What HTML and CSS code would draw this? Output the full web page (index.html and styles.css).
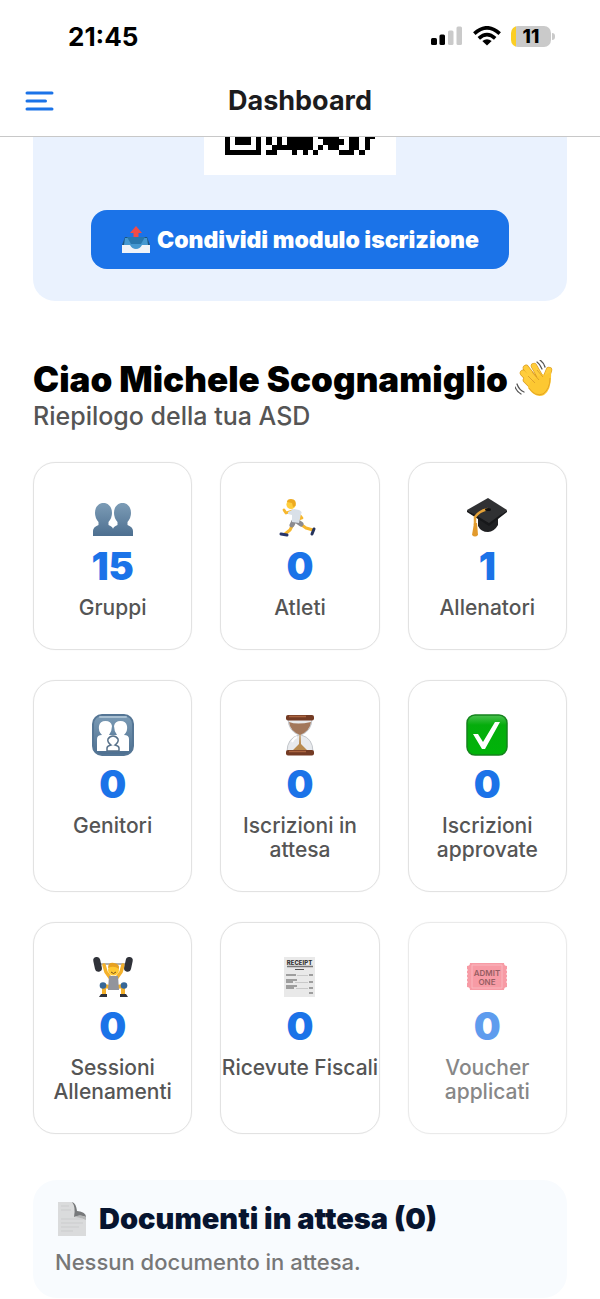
FILE: index.html
```html
<!DOCTYPE html>
<html lang="it">
<head>
<meta charset="utf-8">
<meta name="viewport" content="width=device-width, initial-scale=1">
<title>Dashboard</title>
<link rel="stylesheet" href="styles.css">
</head>
<body>
<div class="status">
  <span class="clock">21:45</span>
  <div class="status-icons">
    <svg width="32" height="20" viewBox="0 0 32 20" aria-hidden="true">
      <rect x="0" y="12" width="6" height="7" rx="1.500"/><rect x="8.500" y="8.500" width="5.500" height="10.500" rx="1.500"/>
      <g fill="#cacaca"><rect x="17" y="4.500" width="5.500" height="14.500" rx="1.500"/><rect x="25.500" y="0.500" width="5.500" height="18.500" rx="1.500"/></g>
    </svg>
    <svg width="28" height="20" viewBox="0 0 28 20" aria-hidden="true">
      <g fill="none" stroke="#000" stroke-width="3.600"><path d="M1.300 7.600Q14-4 26.700 7.600"/><path d="M5.800 12.300Q14 4.800 22.200 12.300"/></g>
      <path d="M9.300 15Q14 11.500 18.700 15L14 19.500Z"/>
    </svg>
    <div class="battery"><span class="level">11</span></div>
  </div>
</div>
<header class="topbar">
  <button class="menu" type="button" aria-label="Menu">
    <svg width="30" height="20" viewBox="0 0 30 20" fill="none" stroke="#1b73e8" stroke-width="3" stroke-linecap="round"><path d="M2 2H27M2 10H20.500M2 18H27"/></svg>
  </button>
  <h1 class="page-title">Dashboard</h1>
</header>
<main class="content">
  <section class="share">
    <div class="qr">
      <svg width="150" height="18" viewBox="0 0 29 3.480" preserveAspectRatio="none" shape-rendering="crispEdges" role="img" aria-label="Codice QR">
        <path fill-rule="evenodd" d="M0 0H1V2.480H6V0H7V3.480H0ZM2 0H5V1.480H2ZM8 0H9V1.480H8ZM8 2.480H9V1.480H10V3.480H8ZM10 0H11V1.480H12V0H17V2.480H16V3.480H15V2.480H14V3.480H13V2.480H10ZM18 0H22V.48H23V1.480H22V2.480H20V1.480H19V.48H18ZM18 1.480H19V2.480H18ZM17 2.480H18V3.480H17ZM24 0H26V2.480H25V3.480H22V2.480H24ZM27 0H29V.48H28V2.480H27ZM26 2.480H27V3.480H26Z"/>
      </svg>
    </div>
    <button class="share-button" type="button">
      <svg width="30" height="30" viewBox="0 0 30 30" aria-hidden="true">
        <path d="M4 12H26L29 20V27H1V20Z" fill="#1c5580"/><path d="M4 13H26L27 20L20 24H10L3 20Z" fill="#4598d0"/><path d="M6 12H24L20 19H10Z" fill="#2877ae"/>
        <path d="M1 20H9Q11 24 15 24T21 20H29V28H1Z" fill="#f0f3f8"/><path d="M15 1L21 8H17.500V12H12.500V8H9Z" fill="#f04b48"/>
      </svg>
      <span>Condividi modulo iscrizione</span>
    </button>
  </section>

  <section class="intro">
    <h2 class="greeting"><span>Ciao Michele Scognamiglio</span>
      <svg width="40" height="38" viewBox="0 0 40 38" aria-hidden="true">
        <g fill="none" stroke-linecap="round" stroke-linejoin="round">
          <g stroke="#d99a20" stroke-width="6.400"><path d="M11 20L20 29M8 13L20 26M11 8L22 22M19 6L27 20M34 10Q32 17 27 23"/></g>
          <g stroke="#ffcd3c" stroke-width="5.200"><path d="M11 20L20 29M8 13L20 26M11 8L22 22M19 6L27 20M34 10Q32 17 27 23"/></g>
        </g>
        <path d="M15 22L27 14Q31 16 32 14L36 12Q37 30 29 35Q21 39 13 28Z" fill="#fdc832"/>
        <path d="M14 28Q20 37 28 34Q35 29 35 18" fill="none" stroke="#e4a425" stroke-width="1"/>
        <path d="M13 16L20 23M17 12L24 20M22 10L28 17" stroke="#dfa22b" stroke-width="1"/>
        <path d="M22 2Q25 4 27 9M25 0Q29 3 30 7M2 24Q4 30 9 32M0 27Q2 32 6 34" fill="none" stroke="#555" stroke-width="1.300" stroke-linecap="round"/>
      </svg>
    </h2>
    <p class="subtitle">Riepilogo della tua ASD</p>
  </section>

  <section class="grid">
    <article class="card">
      <svg class="icon" viewBox="0 0 42 42" aria-hidden="true">
        <defs><linearGradient id="slate" x1="0" y1="0" x2="0" y2="1"><stop offset="0" stop-color="#7c9cb6"/><stop offset="1" stop-color="#4d6f90"/></linearGradient></defs>
        <path d="M11.500 7C16.500 7 20 11 20 17Q20 22 16.500 26V29Q21 31 21 33Q21 31 25.500 29V26Q22 22 22 17C22 11 25.500 7 30.500 7S39 11 39 17Q39 22 35.500 26V29Q41 31 41 35V40H1V35Q1 31 6.500 29V26Q3 22 3 17C3 11 6.500 7 11.500 7Z" fill="url(#slate)"/>
      </svg>
      <strong class="value">15</strong><span class="label">Gruppi</span>
    </article>
    <article class="card">
      <svg class="icon" viewBox="0 0 42 42" aria-hidden="true">
        <g fill="none" stroke-linecap="round" stroke-linejoin="round">
          <path d="M13 15L7 17L5 14M19 17L23 22L17 24" stroke="#f6b72e" stroke-width="2.800"/>
          <path d="M15 26L11 34L6 38M20 27L27 32L34 34" stroke="#f6b72e" stroke-width="3"/>
          <path d="M15 25L13 29M19 26L22 28" stroke="#8b8b90" stroke-width="5"/>
          <path d="M2 38L8 39" stroke="#27356b" stroke-width="3"/><path d="M35 33L33 38" stroke="#26335b" stroke-width="3"/>
        </g>
        <path d="M9 16L15 13L20 14Q24 16 22 18L20 27L13 26L13 19L9 18Z" fill="#d9e0e8"/>
        <circle cx="12" cy="8.500" r="4.600" fill="#ffce3d"/><path d="M8 6Q8 3 12 3Q18 3 16.500 10L14 11L13 7Z" fill="#edaa20"/>
      </svg>
      <strong class="value">0</strong><span class="label">Atleti</span>
    </article>
    <article class="card">
      <svg class="icon" viewBox="0 0 42 42" aria-hidden="true">
        <path d="M12 20H32V29Q28 36 22 36Q15 36 12 30Z" fill="#202123"/><path d="M22 2L41 14L23 29L1 14Z" fill="#303133"/><path d="M1 14L23 27L41 14V16L23 30L1 16Z" fill="#17181a"/>
        <path d="M22 13Q13 15 9 21V29" fill="none" stroke="#e5a238" stroke-width="2.500"/><path d="M8 27H11L12 39Q9 42 6 39Z" fill="#e29a2c"/><ellipse cx="22" cy="13.500" rx="3" ry="1.500" fill="#111"/>
      </svg>
      <strong class="value">1</strong><span class="label">Allenatori</span>
    </article>
    <article class="card">
      <svg class="icon" viewBox="0 0 42 42" aria-hidden="true">
        <rect x="1" y="1" width="40" height="40" rx="9" fill="url(#slate)" stroke="#557695" stroke-width="2"/><path d="M8 3H34" stroke="#a9c0d2" stroke-width="2" stroke-linecap="round"/>
        <path d="M5 37V25Q5 21 10 21Q6 17 7 12Q8 7 13.500 7T20 12Q20 17 17 21H25Q22 17 22 12Q23 7 28.500 7T35 12Q36 17 32 21Q37 21 37 25V37Z" fill="#fff"/>
        <path d="M15 37V34Q15 32 19 31Q15 28 16 25Q18 22 21 22T26 25Q27 28 23 31Q27 32 27 34V37Z" fill="#fff" stroke="#57718a" stroke-width="1.500"/>
      </svg>
      <strong class="value">0</strong><span class="label">Genitori</span>
    </article>
    <article class="card">
      <svg class="icon" viewBox="0 0 42 42" aria-hidden="true">
        <path d="M9 4H33Q33 17 22 21Q34 24 34 38H8Q8 24 20 21Q9 17 9 4Z" fill="#e8eaed" stroke="#c3c6cb"/>
        <path d="M10 8Q18 11 32 8Q31 17 21 21Q11 17 10 8Z" fill="#a2775b"/><path d="M20.500 20H21.500L22 30L29 37H13L20 30Z" fill="#b88a4f"/>
        <path d="M13 28Q15 24 18 23" fill="none" stroke="#fff" stroke-width="2"/>
        <rect x="7" y="1" width="28" height="5.500" rx="2" fill="#743b24"/><rect x="7" y="36" width="28" height="5.500" rx="2" fill="#743b24"/><path d="M10 2.500H27M10 37.500H27" stroke="#ab6540" stroke-width="1.500"/>
      </svg>
      <strong class="value">0</strong><span class="label">Iscrizioni in attesa</span>
    </article>
    <article class="card">
      <svg class="icon" viewBox="0 0 42 42" aria-hidden="true">
        <defs><linearGradient id="green" x1="0" y1="0" x2="0" y2="1"><stop offset="0" stop-color="#4bc050"/><stop offset=".25" stop-color="#05ad0c"/><stop offset="1" stop-color="#00b409"/></linearGradient></defs>
        <rect x="1" y="1" width="40" height="40" rx="8" fill="url(#green)" stroke="#15831d" stroke-width="1.500"/><path d="M7 20H12L17 28L29 8H34L19 35H16Z" fill="#fff"/>
      </svg>
      <strong class="value">0</strong><span class="label">Iscrizioni approvate</span>
    </article>
    <article class="card">
      <svg class="icon" viewBox="0 0 42 42" aria-hidden="true">
        <path d="M6 8H36" stroke="#999" stroke-width="1.500"/>
        <g fill="none" stroke-linecap="round" stroke-linejoin="round"><path d="M12 9L14 16L19 23M31 9L29 16L24 23" stroke="#f4b12b" stroke-width="3.500"/><path d="M18 31L12 30V38M25 31L31 30V38" stroke="#f4b12b" stroke-width="4"/></g>
        <g fill="#303239"><rect x="2" y="1" width="7" height="15" rx="3.500" transform="rotate(-12 5 8)"/><rect x="33" y="1" width="7" height="15" rx="3.500" transform="rotate(12 37 8)"/><path d="M9 38H15V41H7ZM28 38H34L36 41H28Z"/></g>
        <path d="M17 20H26L27 34H16Z" fill="#92949c"/><circle cx="21.500" cy="14" r="5.500" fill="#ffc832"/><path d="M16 12Q16 6 22 7Q28 8 27 13Q22 9 16 12Z" fill="#e7a121"/><path d="M19 16Q21.500 19 24 16" fill="none" stroke="#79501b"/>
        <circle cx="11" cy="29.500" r="3.300" fill="#366797"/><circle cx="32" cy="29.500" r="3.300" fill="#366797"/>
      </svg>
      <strong class="value">0</strong><span class="label">Sessioni Allenamenti</span>
    </article>
    <article class="card">
      <svg class="icon" viewBox="0 0 42 42" aria-hidden="true">
        <path d="M5 1H36V41H5Z" fill="#e9e9e9"/><text x="20.500" y="8.500" class="receipt-text">RECEIPT</text>
        <path d="M8 10.500H34" stroke="#777" stroke-width="1.500"/><g stroke="#555" stroke-width="1.200"><path d="M16 13.500H25M7 19H17M30 19H34M7 24H18M7 26H14M30 26H34M7 30H18M7 32H15M30 32H34M30 37H34"/></g><path d="M18 19.500H29M16 26.500H29M17 32.500H29" stroke="#bbb" stroke-width=".7"/>
      </svg>
      <strong class="value">0</strong><span class="label single-line">Ricevute Fiscali</span>
    </article>
    <article class="card muted">
      <svg class="icon" viewBox="0 0 42 42" aria-hidden="true">
        <path d="M4 7H38Q38 10 41 10V13L40 14L41 15V17L40 18L41 19V21L40 22L41 23V25L40 26L41 27V31Q38 31 38 34H4Q4 31 1 31V27L2 26L1 25V23L2 22L1 21V19L2 18L1 17V15L2 14L1 13V10Q4 10 4 7Z" fill="#f4717f"/><path d="M6 9H36V32H6Z" fill="none" stroke="#f99aa5"/>
        <text x="21" y="19.500" class="ticket-text">ADMIT</text><text x="21" y="28.500" class="ticket-text">ONE</text>
      </svg>
      <strong class="value">0</strong><span class="label">Voucher applicati</span>
    </article>
  </section>

  <section class="documents">
    <h2 class="documents-title">
      <svg width="34" height="34" viewBox="0 0 34 34" aria-hidden="true"><path d="M3 0H17Q21 1 22 9Q31 10 31 15V34H3Z" fill="#dadbdc"/><path d="M17 0Q21 1 22 9Q31 10 31 15Q25 12 19 15Q21 5 17 0Z" fill="#77797b"/><path d="M19 15Q25 12 31 15V18Q24 15 19 15Z" fill="#b6b7b8"/><path d="M6 4H14M6 8H16M6 17H28M6 21H28M6 25H24M6 29H18" stroke="#cbcccd"/></svg>
      <span>Documenti in attesa (0)</span>
    </h2>
    <p class="documents-text">Nessun documento in attesa.</p>
  </section>
</main>
</body>
</html>
```
FILE: styles.css
```css
* { box-sizing: border-box; }
body { margin: 0; background: #fff; color: #000; font-family: Inter, "Liberation Sans", sans-serif; }
h1, h2, p { margin: 0; }
button { border: 0; font: inherit; cursor: pointer; }
svg { flex: none; }

.status { display: flex; justify-content: space-between; align-items: center; height: 72px; padding: 0 45px 0 68px; }
.clock { font-size: 26px; font-weight: 700; }
.status-icons { display: flex; align-items: center; gap: 10px; }
.battery { display: flex; align-items: center; gap: 1px; }
.battery::after { content: ""; width: 3px; height: 7px; border-radius: 0 4px 4px 0; background: #cacaca; }
.level { width: 40px; height: 21px; border-radius: 7px; background: linear-gradient(90deg, #fbce24 5px, #cacaca 5px); font-size: 19px; font-weight: 800; line-height: 21px; text-align: center; }

.topbar { display: grid; grid-template-columns: 1fr auto 1fr; align-items: center; height: 65px; padding: 0 25px 6px; border-bottom: 1px solid #c8c8c8; }
.menu { display: flex; justify-self: start; padding: 0; background: none; }
.page-title { color: #1c1c1e; font-size: 27px; font-weight: 700; line-height: 32px; }

.content { padding: 0 33px; }
.share { display: flex; flex-direction: column; align-items: center; gap: 35px; padding: 0 58px 32px; border-radius: 0 0 22px 22px; background: #eaf2fe; }
.qr { display: flex; padding: 0 21px 20px; background: #fff; }
.share-button { display: flex; align-items: center; justify-content: center; gap: 6px; width: 100%; height: 59px; padding: 0; border-radius: 16px; background: #1b73e8; color: #fff; font-size: 23px; font-weight: 900; }

.intro { padding: 58px 0 29px; }
.greeting { display: flex; align-items: center; gap: 7px; font-size: 35px; font-weight: 900; line-height: 40px; white-space: nowrap; }
.subtitle { color: #555; font-size: 25px; font-weight: 500; line-height: 34px; }

.grid { display: grid; grid-template-columns: repeat(3, minmax(0, 1fr)); gap: 30px 28px; }
.card { display: flex; flex-direction: column; align-items: center; padding: 33px 0 29px; border: 1px solid #e2e2e2; border-radius: 22px; box-shadow: 0 0 1px #e2e2e2; }
.muted { opacity: .7; }
.icon { width: 42px; height: 42px; }
.value { margin: 6px 0 8px; color: #1b73e8; font-size: 38px; font-weight: 900; line-height: 44px; }
.label { padding: 0 16px; color: #555; font-size: 21px; font-weight: 500; line-height: 24px; text-align: center; }
.single-line { padding: 0; white-space: nowrap; }
.receipt-text { font-size: 6px; font-weight: 800; text-anchor: middle; fill: #333; }
.ticket-text { font-size: 8px; font-weight: 600; text-anchor: middle; fill: #6b1720; }

.documents { margin-top: 46px; padding: 20px 22px; border-radius: 24px; background: #f8fbfe; }
.documents-title { display: flex; align-items: center; gap: 10px; color: #07142f; font-size: 29px; font-weight: 900; line-height: 38px; }
.documents-text { margin-top: 8px; color: #777; font-size: 22px; font-weight: 500; line-height: 32px; }
```
